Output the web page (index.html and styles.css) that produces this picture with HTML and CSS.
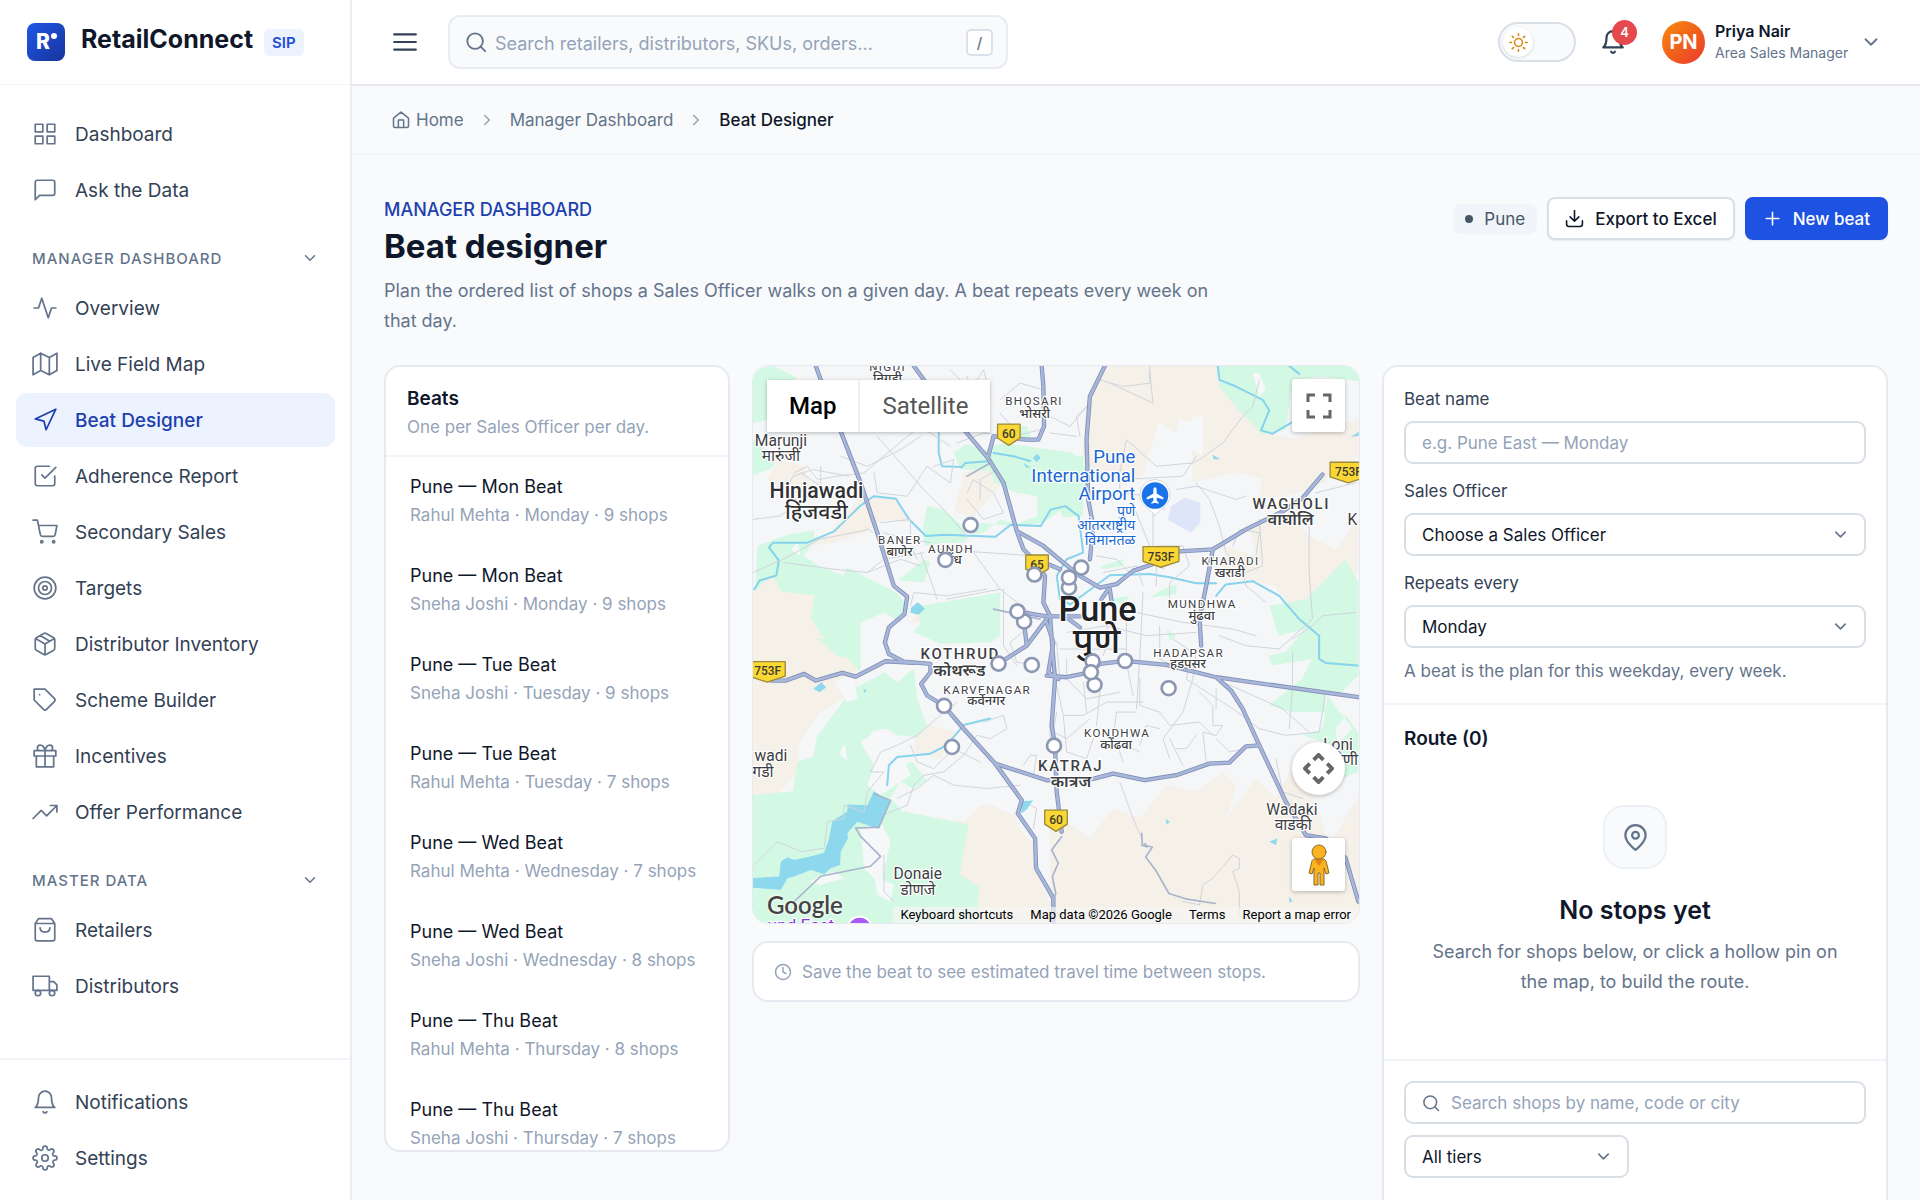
FILE: index.html
```html
<!DOCTYPE html>
<html lang="en">
<head>
<meta charset="utf-8">
<meta name="viewport" content="width=device-width, initial-scale=1">
<title>Beat Designer · RetailConnect</title>
<link rel="stylesheet" href="styles.css">
</head>
<body>
<svg class="sprite" aria-hidden="true">
  <symbol id="grid" viewBox="0 0 24 24"><path d="M3 3h7v7H3zM14 3h7v7h-7zM14 14h7v7h-7zM3 14h7v7H3z"/></symbol>
  <symbol id="chat" viewBox="0 0 24 24"><path d="M21 15a2 2 0 0 1-2 2H7l-4 4V5a2 2 0 0 1 2-2h14a2 2 0 0 1 2 2z"/></symbol>
  <symbol id="down" viewBox="0 0 24 24"><path d="M6 9l6 6 6-6"/></symbol>
  <symbol id="right" viewBox="0 0 24 24"><path d="M9 18l6-6-6-6"/></symbol>
  <symbol id="activity" viewBox="0 0 24 24"><path d="M22 12h-4l-3 9L9 3l-3 9H2"/></symbol>
  <symbol id="map" viewBox="0 0 24 24"><path d="M1 6v16l7-4 8 4 7-4V2l-7 4-8-4zM8 2v16M16 6v16"/></symbol>
  <symbol id="nav" viewBox="0 0 24 24"><path d="M3 11l19-9-9 19-2-8z"/></symbol>
  <symbol id="check" viewBox="0 0 24 24"><path d="M9 11l3 3L22 4M21 12v7a2 2 0 0 1-2 2H5a2 2 0 0 1-2-2V5a2 2 0 0 1 2-2h11"/></symbol>
  <symbol id="cart" viewBox="0 0 24 24"><circle cx="9" cy="21" r="1"/><circle cx="20" cy="21" r="1"/><path d="M1 1h4l2.7 13.4a2 2 0 0 0 2 1.6h9.7a2 2 0 0 0 2-1.6L23 6H6"/></symbol>
  <symbol id="target" viewBox="0 0 24 24"><circle cx="12" cy="12" r="10"/><circle cx="12" cy="12" r="6"/><circle cx="12" cy="12" r="2"/></symbol>
  <symbol id="box" viewBox="0 0 24 24"><path d="M16.500 9.400l-9-5.190M21 16V8a2 2 0 0 0-1-1.730l-7-4a2 2 0 0 0-2 0l-7 4A2 2 0 0 0 3 8v8a2 2 0 0 0 1 1.730l7 4a2 2 0 0 0 2 0l7-4A2 2 0 0 0 21 16zM3.270 6.960L12 12l8.730-5.040M12 22V12"/></symbol>
  <symbol id="tag" viewBox="0 0 24 24"><path d="M20.600 13.400l-7.200 7.200a2 2 0 0 1-2.800 0L2 12V2h10l8.600 8.600a2 2 0 0 1 0 2.800zM7 7h.01"/></symbol>
  <symbol id="gift" viewBox="0 0 24 24"><path d="M20 12v10H4V12M2 7h20v5H2zM12 22V7M12 7H7.500a2.500 2.500 0 0 1 0-5C11 2 12 7 12 7zM12 7h4.500a2.500 2.500 0 0 0 0-5C13 2 12 7 12 7z"/></symbol>
  <symbol id="trend" viewBox="0 0 24 24"><path d="M23 6l-9.500 9.500-5-5L1 18M17 6h6v6"/></symbol>
  <symbol id="bag" viewBox="0 0 24 24"><path d="M6 1.500h12l3 4.500v14a2 2 0 0 1-2 2H5a2 2 0 0 1-2-2V6zM3 6h18M16.500 10c0 2.500-2 4-4.500 4s-4.500-1.500-4.500-4"/></symbol>
  <symbol id="truck" viewBox="0 0 24 24"><path d="M1 3h15v13H1zM16 8h4l3 3v5h-7z"/><circle cx="5.500" cy="18.500" r="2.500"/><circle cx="18.500" cy="18.500" r="2.500"/></symbol>
  <symbol id="bell" viewBox="0 0 24 24"><path d="M18 8A6 6 0 0 0 6 8c0 7-3 9-3 9h18s-3-2-3-9M13.730 21a2 2 0 0 1-3.460 0"/></symbol>
  <symbol id="gear" viewBox="0 0 24 24"><circle cx="12" cy="12" r="3"/><path d="M19.400 15a1.650 1.650 0 0 0 .33 1.820l.06.06a2 2 0 1 1-2.830 2.830l-.06-.06a1.650 1.650 0 0 0-2.800 1.170V21a2 2 0 0 1-4 0v-.09A1.650 1.650 0 0 0 9 19.400a1.650 1.650 0 0 0-1.820.33l-.06.06a2 2 0 1 1-2.830-2.830l.06-.06A1.650 1.650 0 0 0 3.090 14H3a2 2 0 0 1 0-4h.09A1.650 1.650 0 0 0 4.600 9a1.650 1.650 0 0 0-.33-1.820l-.06-.06a2 2 0 1 1 2.830-2.830l.06.06A1.650 1.650 0 0 0 10 3.090V3a2 2 0 0 1 4 0v.09a1.650 1.650 0 0 0 2.800 1.170l.06-.06a2 2 0 1 1 2.830 2.830l-.06.06A1.650 1.650 0 0 0 20.910 10H21a2 2 0 0 1 0 4h-.09a1.650 1.650 0 0 0-1.510 1z"/></symbol>
  <symbol id="menu" viewBox="0 0 24 24"><path d="M2 5h20M2 12h20M2 19h20"/></symbol>
  <symbol id="search" viewBox="0 0 24 24"><circle cx="11" cy="11" r="8.500"/><path d="M22 22l-5-5"/></symbol>
  <symbol id="sun" viewBox="0 0 24 24"><circle cx="12" cy="12" r="5"/><path d="M12 1v2M12 21v2M4.200 4.200l1.400 1.400M18.400 18.400l1.400 1.400M1 12h2M21 12h2M4.200 19.800l1.400-1.400M18.400 5.600l1.400-1.400"/></symbol>
  <symbol id="home" viewBox="0 0 24 24"><path d="M2 9.500L12 1.500l10 8V20a2 2 0 0 1-2 2H4a2 2 0 0 1-2-2zM8.500 22V12h7v10"/></symbol>
  <symbol id="download" viewBox="0 0 24 24"><path d="M22 15v4a3 3 0 0 1-3 3H5a3 3 0 0 1-3-3v-4M6.500 10l5.500 5.500 5.500-5.500M12 15V2"/></symbol>
  <symbol id="plus" viewBox="0 0 24 24"><path d="M12 4v16M4 12h16"/></symbol>
  <symbol id="clock" viewBox="0 0 24 24"><circle cx="12" cy="12" r="10"/><path d="M12 6v6l4 2"/></symbol>
  <symbol id="pin" viewBox="0 0 24 24"><path d="M21 10c0 6.500-9 13-9 13s-9-6.500-9-13a9 9 0 0 1 18 0z"/><circle cx="12" cy="10" r="3"/></symbol>
</svg>
<div class="app">
  <aside class="sidebar">
    <div class="brand">
      <svg class="logo" viewBox="0 0 38 38" aria-hidden="true">
        <defs><linearGradient id="lg" x1="0" y1="0" x2="1" y2="1"><stop offset="0" stop-color="#1f57e8"/><stop offset="1" stop-color="#17349c"/></linearGradient></defs>
        <rect width="38" height="38" rx="8" fill="url(#lg)"/>
        <text class="logo-letter" x="9" y="26">R</text><circle cx="27" cy="13" r="3" fill="#fff"/>
      </svg>
      <span class="brand-name">RetailConnect</span><span class="brand-tag">SIP</span>
    </div>
    <nav class="nav">
      <a class="item" href="#"><svg class="icon"><use href="#grid"/></svg>Dashboard</a>
      <a class="item" href="#"><svg class="icon"><use href="#chat"/></svg>Ask the Data</a>
      <button class="group" type="button">MANAGER DASHBOARD<svg><use href="#down"/></svg></button>
      <a class="item" href="#"><svg class="icon"><use href="#activity"/></svg>Overview</a>
      <a class="item" href="#"><svg class="icon"><use href="#map"/></svg>Live Field Map</a>
      <a class="item active" href="#" aria-current="page"><svg class="icon"><use href="#nav"/></svg>Beat Designer</a>
      <a class="item" href="#"><svg class="icon"><use href="#check"/></svg>Adherence Report</a>
      <a class="item" href="#"><svg class="icon"><use href="#cart"/></svg>Secondary Sales</a>
      <a class="item" href="#"><svg class="icon"><use href="#target"/></svg>Targets</a>
      <a class="item" href="#"><svg class="icon"><use href="#box"/></svg>Distributor Inventory</a>
      <a class="item" href="#"><svg class="icon"><use href="#tag"/></svg>Scheme Builder</a>
      <a class="item" href="#"><svg class="icon"><use href="#gift"/></svg>Incentives</a>
      <a class="item" href="#"><svg class="icon"><use href="#trend"/></svg>Offer Performance</a>
      <button class="group" type="button">MASTER DATA<svg><use href="#down"/></svg></button>
      <a class="item" href="#"><svg class="icon"><use href="#bag"/></svg>Retailers</a>
      <a class="item" href="#"><svg class="icon"><use href="#truck"/></svg>Distributors</a>
    </nav>
    <nav class="nav nav-foot">
      <a class="item" href="#"><svg class="icon"><use href="#bell"/></svg>Notifications</a>
      <a class="item" href="#"><svg class="icon"><use href="#gear"/></svg>Settings</a>
    </nav>
  </aside>

  <div class="main">
    <header class="topbar">
      <button class="icon-btn" type="button" aria-label="Toggle menu"><svg class="icon"><use href="#menu"/></svg></button>
      <div class="global-search">
        <svg class="icon"><use href="#search"/></svg>
        <input type="search" aria-label="Search" placeholder="Search retailers, distributors, SKUs, orders…">
        <kbd>/</kbd>
      </div>
      <div class="top-actions">
        <button class="theme" type="button" aria-label="Switch theme"><span class="knob"><svg><use href="#sun"/></svg></span></button>
        <button class="bell" type="button" aria-label="Notifications"><svg class="icon"><use href="#bell"/></svg><span class="count">4</span></button>
        <button class="user" type="button">
          <span class="avatar">PN</span>
          <span class="who"><span class="who-name">Priya Nair</span><span class="who-role">Area Sales Manager</span></span>
          <svg class="small-icon"><use href="#down"/></svg>
        </button>
      </div>
    </header>
    <nav class="crumbs" aria-label="Breadcrumb">
      <a href="#"><svg class="home"><use href="#home"/></svg>Home</a>
      <svg class="sep"><use href="#right"/></svg>
      <a href="#">Manager Dashboard</a>
      <svg class="sep"><use href="#right"/></svg>
      <span class="here">Beat Designer</span>
    </nav>
    <main class="page">
      <div class="page-head">
        <div class="intro">
          <p class="eyebrow">MANAGER DASHBOARD</p>
          <h1>Beat designer</h1>
          <p class="desc">Plan the ordered list of shops a Sales Officer walks on a given day. A beat repeats every week on that day.</p>
        </div>
        <div class="actions">
          <span class="chip">Pune</span>
          <button class="btn" type="button"><svg><use href="#download"/></svg>Export to Excel</button>
          <button class="btn primary" type="button"><svg><use href="#plus"/></svg>New beat</button>
        </div>
      </div>

      <div class="columns">
        <section class="card beats">
          <header class="beats-head"><h2>Beats</h2><p>One per Sales Officer per day.</p></header>
          <div class="beat-list">
            <button class="beat" type="button"><span class="beat-name">Pune — Mon Beat</span><span class="beat-meta">Rahul Mehta · Monday · 9 shops</span></button>
            <button class="beat" type="button"><span class="beat-name">Pune — Mon Beat</span><span class="beat-meta">Sneha Joshi · Monday · 9 shops</span></button>
            <button class="beat" type="button"><span class="beat-name">Pune — Tue Beat</span><span class="beat-meta">Sneha Joshi · Tuesday · 9 shops</span></button>
            <button class="beat" type="button"><span class="beat-name">Pune — Tue Beat</span><span class="beat-meta">Rahul Mehta · Tuesday · 7 shops</span></button>
            <button class="beat" type="button"><span class="beat-name">Pune — Wed Beat</span><span class="beat-meta">Rahul Mehta · Wednesday · 7 shops</span></button>
            <button class="beat" type="button"><span class="beat-name">Pune — Wed Beat</span><span class="beat-meta">Sneha Joshi · Wednesday · 8 shops</span></button>
            <button class="beat" type="button"><span class="beat-name">Pune — Thu Beat</span><span class="beat-meta">Rahul Mehta · Thursday · 8 shops</span></button>
            <button class="beat" type="button"><span class="beat-name">Pune — Thu Beat</span><span class="beat-meta">Sneha Joshi · Thursday · 7 shops</span></button>
          </div>
        </section>

        <section class="center">
          <div class="map">
            <svg class="map-art" viewBox="6 18 1824 1677" preserveAspectRatio="xMidYMid slice" role="img" aria-label="Map of Pune with shop pins">
              <rect x="0" y="0" width="1840" height="1700" fill="#f5f6f8"/>
              <g fill="#f5f0e8">
                <path d="M1065 18h340l10 60 60 80 70 60 90 20 193-60v120l-80 20-20 50-110 40-90 10 10-60-80-20-130 30 0-180-40-10-10 40-50-30-50 160-60 30-120-70 10-170z"/>
                <path d="M6 690l60-60 40 60 90 10-10 80 80 90 60 30-10 100-110 60-60 90-10 100-60 60-70 10z"/>
                <path d="M6 90l44 10 0 80-44 10zM80 300l80 20 20 60-60 30-70-50zM640 340l90-20 20 60-80 90-60-10z"/>
                <path d="M330 410l100 10 60 70-90-10-60 40-90 30-150 20-20-30 150-10zM480 790l30-50 60-10-50 60zM120 540l70-30 0 30z"/>
                <path d="M590 1490l30-130 80-20 90-20 10 80 50 60 10 80 40 100 10 60H600l50-110zM500 1090l120 30-50 80-80-20z"/>
                <path d="M900 1400l60 0 60 40 70-90 80 30 80-100 90 20 80-60 40 40-30 100 90-120 60 60 40-80 60 40 60 180 108-180v412H900z"/>
                <path d="M1500 500l120-30 60 60 80 40 68-90v160l-60 40-50 60-80 20-60-80-100-20-60-40 10-60 90 30z"/>
              </g>
              <g fill="#d3f8e3">
                <path d="M6 30l60-12 70 34-10 40-76 8v80l-44 10zM6 240l70 60-10 24-60 24zM20 560l90-34 80-12-6 40-26 36 50 32 70 28 10-26 90 46 60 30 32 40-20 50-50-30-70 30v150l-56-60-60-50-34-56 12-66-100-10-30-52-50 50z"/>
                <path d="M530 440l50 10 60 54v26l60-10 50-40 60 20 70-10 110-80 30-70-50-60-210-30-60 20-50-16-40 24 20 50 90 6 12 34 60 30 70 12 0 60-80 30-90-10-50 60-60 0-60 10-4-60zM500 742l250-42v130l-30 20-150 4-80-34 20-30zM460 650l60-50 20 10-20 60-80-8zM750 190l80 10 20 50-60-10z"/>
                <path d="M1400 18h430v46l-110-14-90 10-20 150-70 14-70-70-60-74zM1000 290l-90-6-20 80 50 110 60-6zM1560 740l110-20 60-60 60-60 38 70v280l-60 60-40-10 0 60-100 0-70-20 100-80 30-60-120 20-10-30 50-10 60-70-80 20zM1735 1010l-15 100-60 20 100 30 50-50zM1760 1110l30-40 38 50v120l-50 20z"/>
                <path d="M1240 690l40-14 0 30-80 10zM1050 620l70-20 0 20-60 10zM1080 720l60-10-20 30z"/>
                <path d="M290 1010l20-20 130-70h50l10 100 30 80-30 36-60-6-30-20-46 8-20 50 40 20 30 50 70-30 46 60-30 30-50-30-30 50 34 40 200 40-26 150 60 40-10 80-36 86H6v-445l120-10 14-90 48-14 10-60zM200 840l60 50 70 12-30-62z"/>
                <path d="M160 430l24 30-30 20zM1250 810l30 20-20 16z"/>
              </g>
              <g fill="#f6f7f9">
                <path d="M265 1185l18-30 6 50zM330 1410l60-20 30 60-30 130-50-50zM175 1570l70-30 40 20-80 20zM330 1150l60-40 50 30 40 110-90 60-40-30 20-60zM370 1550l60 30-10 50-40-20zM440 1320l100-60 100 40 160-10-10 80-90-40-60 60-80-30-80-30z"/>
                <path d="M250 970l60-30 10 80-30 10zM390 930l60-40 50 30-60 50zM1300 250l30-80 30 0v120zM1510 40l20 0 20 50-20 20zM120 570l20-20 10 40z"/>
              </g>
              <path d="M1265 440l40-25 47 15v60l-28 30-70-40z" fill="#dfe5f8"/>
              <path fill="#8ed8ee" d="M0 1560L85 1555 90 1510 110 1497 130 1505 175 1495 220 1483 235 1440 245 1388 290 1360 290 1338 350 1340 370 1298 420 1330 385 1412 320 1390 290 1424 292 1440 270 1480 268 1520 240 1530 220 1548 180 1535 130 1555 110 1560 90 1595 0 1588z"/>
              <g fill="#8ed8ee">
                <path d="M482 745l20-16 22 20-20 18-24-6zM815 1328l34-2-20 28-16 12zM188 990l24-20 14 16-20 14zM848 295l14-12 10 12-12 12zM820 310l22 14-14 0zM1805 232l24-16v12zM1390 285l22 14-20 0zM1560 1450l24-10-4 20zM338 992l10 0-5 12zM1249 1382l12 8-10 8zM1620 1615l10 14-10 4z"/>
              </g>
              <g class="river">
                <path d="M10 690l16-26 50-15 8-45-30-40 12-14 104 0 80-34 80-78 40-28 66 8 40 62 50 50 60-4 150 6 46-36 90 4 30-50 44-10 40 30 14 110-50 20-30 50 10 70 30 16 120-88 120-4 60 10 80 18 60 0M1400 710l28-34 82-10 80 44 60 70 60 50 0 70 20 12 96 8"/>
                <path d="M410 1280l5-60 25-25 100-10 50-26 50-60 80-20M1405 18l5 42 50 20 80 40 20 32-25 60 35 10 58-34M1620 18l30 24M565 220l0 60 10 40 60 2 10-12 70-5M730 280l60 10 50 14"/>
              </g>
              <g class="road">
                <path d="M130 340l40-20 30 40 60-10 80-10 130-110 40-30 90 60M6 480l80-10 60-40-40-40 20-40 60-20 110 20M380 230l140 160 60 60 70 80M270 290l80 30 100-50 60-40M370 340l10 60 90 10 60-90 70 50 10-70-60 20M560 60l0 60 60 60 60-50-30-80M600 30l60 60 40-60 20 70-60 30M750 120l60-50 70 20M750 160l50 60M400 60l60 80-60 40M620 250l80-30 90 10 80-20M930 120l-40 20M6 640l90-40 110-60 150-30 10 10M100 610l150 20 100 10 100-40 60 20M350 640l50-40 120-20M480 740l10-40 100 10 120-20M510 580l30 80 20 60M590 720l160-30M670 580l80 110 90 70M560 570l300 20M390 490l90-10 0 60 60 10M400 520l70 20 30 60M760 690v170l40 60M840 800l-60 50 20 60 70 10M690 420v-60l50-30M650 400l20-40 60 40 30 60-60 20-50-60M150 340l60 40 0-60M700 1090l60-20 10 40-50 30-40-10-40 60-60 50-60 10-30 30-20 60-70 30M440 1320l60-30 50-40 60 30 100 10 100-10M480 1160l20 50 50 20 60-60 80 40M820 1220l20-30 20 0-10 60-40-10M840 1340l20 10-10 60M10 1520l70-70 70 30 70-10 10-80 50-10 0-40 60 20 10-60 50-60-40 0 30-60 50-20 60-30 70-60 50-40M400 1490l0 110 30 30"/>
                <path d="M1050 60l70 20 80-10 0-50M1080 70l130 60-10-100M900 170l60 30 60-70-40 40 10 60M900 220l80 10M1530 60l-20 80-30 30-60 80-70 50-20 10-110 10-90-80-20 100 0 60 90 10M1120 360l180-10 40-60M1215 360l-30 60 60 30M1280 390l60-10 120 40 30-10M1340 370l40 50 30 80 20 80 30 30M1210 460l0 120 30 50M1160 460l40 100 0 40M1040 590l60 10 40 40M1060 640l100-20 20 60M1220 680v-120h80l20 60-60 50 0 60M1450 560l20-50 60 10M1530 520l-10 70-40 40 10 50 60 50M1680 480v160l10 140-100 90-100-10-80-30M1820 760l-100 10-30 30-60 40M1700 400l120-30M1530 480l10 140-80 30M1160 760l140 30 150 20 70 20M1060 770l20 60-20 60M1130 730v180l20 100M1180 700l-10 200-10 150M1230 800v100l80 40M950 820l120-20 120 30 150-10M930 870l200 0M950 900l0 60 60 60 100-20M1270 840l60 40-20 80 140 90 80 60 80 20 100-10 20-120M1400 960l200 90 80 70M1630 880l0 100-10 130M920 980l20 90 60 0 70-40 110 0M920 1060l-10 60 40 20 70-60M1000 970l10 90M1050 1000l-10 100M940 1070l10 110 60 20 20-60M1170 960v80l60 20 30 40 90-10 40 40M1160 1060l-60 0-10 80 80 40M1100 1150l20 60M1260 1200l-20-60 60-80 30-100 10-80M1280 1170l30 0 30-40M1300 1220l-40-80M1350 1000l40 40 0 60 30 0-20 30-40-10 10 90M1400 1050v-60M1400 1140l40 40 50-10M1580 1200l20 100 60 20M900 1100l0 50M1110 1270l40 110 26 60"/>
                <path d="M1350 1640l10-60 30-20 60-70 20 10 0 30-20 10 20 60 0 70 30 30M1350 1640l-50-10M920 850l10 120M1230 1110l-40-10-20 60"/>
              </g>
              <g class="sub">
                <path d="M130 1630l80-76 150-30 30-30-60-60-15-25 70-3 35-80-50-20M1176 1425l2 35 30 6-20 30 30 40 40 70 50 16 90 14M1176 1460l16 6-6-10M650 350l70-40M730 750l140 30"/>
              </g>
              <g id="highways">
                <g class="hw-edge"><use href="#hw"/></g>
                <g class="hw-fill"><g id="hw">
                  <path d="M195 18l15 42 60 155 60 155 50 150 50 160 40 32-8 53-47 40-12 45 12 35 45 23 80 7 0 25-28 35 18 35 51 31 59 69 95 105 80 110-12 40 52 75 3 90 52 90 0 73"/>
                  <path d="M490 18l60 82 100 120 63 75 47 75 40 145 80 45 60 50 50 40 60 35 50-10 50-40 50-17 90-42 100-6 100-60 110-54 60-40 60-71"/>
                  <path d="M875 18l5 62 2 120-17 40-35 0-100-10-17 65M1065 18l-45 92-10 130 5 180 15 80-10 100"/>
                  <path d="M800 515l20 55 30 30 35 50-5 80 20 40 5 70 10 120-10 140 10 60 5 140 15 120M800 757l90 15 100 0M890 780l-60 80-85 54M830 860l-6-50M890 790l20 60-15 90 30 20M860 600l70 30"/>
                  <path d="M60 965l45 0 55-20 35 20 80-23 40 11 90-46 85 5M890 950l60 5 70-15 30-25 76-9 124 12 150 37 428 60M1400 955l45 40 35 55 50 110 80 170 60 100 60 10 60 60 38 130"/>
                  <path d="M735 1215l155 50 140-4 60-16 95 20 95-15 100-35 60-3 50-49 40-3M1390 570l-20 110-20 100 5 80M1075 690l-20 30M1080 690l5 35M950 775l40 30"/>
                </g></g>
                <path class="sub" d="M935 1435l-30 40 20 40-18 40 10 50-8 40"/>
              </g>
              <g class="shields">
                <path d="M190 64h62l-2 30h-58zM742 193h68v42l-34 22-34-22zM827 587h68v42l-34 22-34-22zM1180 562h108v44l-54 18-54-18zM1743 308h110v44l-55 18-55-18zM-5 908h108v44l-54 18-54-18zM884 1355h68v42l-34 22-34-22z"/>
                <g class="shield-text">
                  <text x="776" y="235">60</text><text x="861" y="629">65</text><text x="1234" y="604">753F</text><text x="1798" y="349">753F</text><text x="50" y="949">753F</text><text x="918" y="1397">60</text>
                </g>
              </g>
              <g class="label caps">
                <text x="411" y="34">NIGDI</text><text x="852" y="137">BHOSARI</text><text x="448" y="554">BANER</text><text x="602" y="580">AUNDH</text><text x="711" y="1004">KARVENAGAR</text><text x="1443" y="617">KHARADI</text><text x="1358" y="746">MUNDHWA</text><text x="1317" y="893">HADAPSAR</text><text x="1102" y="1136">KONDHWA</text>
              </g>
              <g class="label caps big"><text x="630" y="900">KOTHRUD</text><text x="1626" y="450">WAGHOLI</text><text x="962" y="1238">KATRAJ</text></g>
              <g class="label hindi"><text x="411" y="68">निगडी</text><text x="854" y="174">भोसरी</text><text x="447" y="590">बाणेर</text><text x="601" y="614">औंध</text><text x="708" y="1038">कर्वेनगर</text><text x="1441" y="654">खराडी</text><text x="1356" y="784">मुंढवा</text><text x="1315" y="928">हडपसर</text><text x="1099" y="1172">कोंढवा</text></g>
              <g class="label hindi mid"><text x="627" y="950">कोथरूड</text><text x="1624" y="498">वाघोलि</text><text x="963" y="1284">कात्रज</text></g>
              <g class="label town"><text x="90" y="260">Marunji</text><text x="90" y="304">मारुंजी</text><text x="502" y="1562">Donaie</text><text x="502" y="1610">डोणजे</text><text x="1628" y="1370">Wadaki</text><text x="1632" y="1416">वाडकी</text><text x="1767" y="1174">Loni</text><text x="1782" y="1218">लोणी</text><text x="60" y="1208">wadi</text><text x="36" y="1254">गडी</text><text x="1810" y="498">K</text></g>
              <g class="label city"><text x="197" y="415">Hinjawadi</text><text x="197" y="478">हिंजवडी</text></g>
              <g class="label capital"><text x="1043" y="786">Pune</text><text class="capital-hindi" x="1040" y="882">पुणे</text></g>
              <g class="label airport"><text x="1157" y="311">Pune</text><text x="1157" y="367">International</text><text x="1157" y="423">Airport</text></g>
              <g class="label airport small"><text x="1157" y="470">पुणे</text><text x="1157" y="513">आंतरराष्ट्रीय</text><text x="1157" y="558">विमानतळ</text></g>
              <text class="label east" x="150" y="1718">und East</text>
              <circle cx="327" cy="1714" r="38" fill="#a45cf5" stroke="#fff" stroke-width="6"/>
              <path d="M1216 468c-12-18-46-30-46-62a46 46 0 0 1 92 0c0 32-34 44-46 62z" fill="#fff" stroke="#c5cad3" stroke-width="2"/>
              <circle cx="1216" cy="408" r="40" fill="#1a73e8"/>
              <path transform="translate(1216 408)" d="M0-25c3 0 5 4 5 9v10l20 12v6L5 6v10l6 5v4L0 22l-11 3v-4l6-5V6l-20 6V6L-5-6v-10c0-5 2-9 5-9z" fill="#fff"/>
              <g class="pins">
                <circle cx="661" cy="497" r="21"/><circle cx="585" cy="602" r="21"/><circle cx="853" cy="646" r="21"/><circle cx="822" cy="787" r="21"/><circle cx="802" cy="757" r="21"/><circle cx="957" cy="685" r="21"/><circle cx="994" cy="625" r="21"/><circle cx="957" cy="655" r="21"/><circle cx="745" cy="914" r="21"/><circle cx="845" cy="918" r="21"/><circle cx="581" cy="1041" r="21"/><circle cx="605" cy="1165" r="21"/><circle cx="912" cy="1161" r="21"/><circle cx="1028" cy="907" r="21"/><circle cx="1126" cy="906" r="21"/><circle cx="1034" cy="978" r="21"/><circle cx="1023" cy="940" r="21"/><circle cx="1257" cy="988" r="21"/>
              </g>
            </svg>
            <div class="map-type"><button class="on" type="button">Map</button><button type="button">Satellite</button></div>
            <button class="map-btn full" type="button" aria-label="Toggle fullscreen"><svg viewBox="0 0 26 26"><path d="M2 9V2h7M17 2h7v7M24 17v7h-7M9 24H2v-7"/></svg></button>
            <button class="map-btn pan" type="button" aria-label="Map camera controls"><svg viewBox="0 0 32 32"><path d="M11 7l5-5 5 5M25 11l5 5-5 5M21 25l-5 5-5-5M7 21l-5-5 5-5"/></svg></button>
            <button class="map-btn man" type="button" aria-label="Street View"><svg viewBox="0 0 24 42"><path d="M7 15h10l2 2 3 12-3 1-2-6v17h-4V29h-2v12H7V24l-2 6-3-1 3-12z" fill="#fbb41f" stroke="#8a6a2a"/><path d="M7 15h10l-5 7z" fill="#e0861a"/><circle cx="12" cy="8" r="7" fill="#fbb41f" stroke="#8a6a2a"/></svg></button>
            <span class="google">Google</span>
            <div class="map-legal"><button type="button">Keyboard shortcuts</button><span>Map data ©2026 Google</span><a href="#">Terms</a><a href="#">Report a map error</a></div>
          </div>
          <p class="card travel"><svg><use href="#clock"/></svg>Save the beat to see estimated travel time between stops.</p>
        </section>

        <form class="card editor">
          <div class="block">
            <label for="name">Beat name</label>
            <input class="field" id="name" type="text" placeholder="e.g. Pune East — Monday">
            <label for="officer">Sales Officer</label>
            <span class="select"><select class="field" id="officer"><option>Choose a Sales Officer</option></select><svg><use href="#down"/></svg></span>
            <label for="day">Repeats every</label>
            <span class="select"><select class="field" id="day"><option>Monday</option></select><svg><use href="#down"/></svg></span>
            <p class="hint">A beat is the plan for this weekday, every week.</p>
          </div>
          <div class="block route">
            <h2>Route (0)</h2>
            <div class="empty">
              <span class="empty-icon"><svg><use href="#pin"/></svg></span>
              <h3>No stops yet</h3>
              <p>Search for shops below, or click a hollow pin on the map, to build the route.</p>
            </div>
          </div>
          <div class="block finder">
            <div class="field shop-search"><svg><use href="#search"/></svg><input type="search" aria-label="Search shops" placeholder="Search shops by name, code or city"></div>
            <span class="select tiers"><select class="field" aria-label="Tier"><option>All tiers</option></select><svg><use href="#down"/></svg></span>
          </div>
        </form>
      </div>
    </main>
  </div>
</div>
</body>
</html>
```

FILE: styles.css
```css
* { box-sizing: border-box; }
body, h1, h2, h3, p { margin: 0; }
body { font-family: Inter, "Noto Sans", sans-serif; font-size: 18px; color: #0f172a; background: #f8fafc; }
button, input, select { font: inherit; color: inherit; }
button { border: 0; padding: 0; background: none; cursor: pointer; }
a { color: inherit; text-decoration: none; }
svg { fill: none; stroke: currentColor; stroke-width: 2; stroke-linecap: round; stroke-linejoin: round; flex: none; }
input::placeholder { color: #94a3b8; opacity: 1; }
.sprite { display: none; }
.icon { width: 26px; height: 26px; stroke-width: 1.6; }
.small-icon { width: 22px; height: 22px; color: #64748b; }

.app { display: flex; height: 100vh; overflow: hidden; }

/* Sidebar */
.sidebar { flex: none; width: 352px; display: flex; flex-direction: column; background: #fff; border-right: 2px solid #e9edf2; }
.brand { display: flex; align-items: center; height: 85px; padding: 0 27px; border-bottom: 1px solid #f1f5f9; }
.logo { width: 38px; height: 38px; stroke: none; }
.logo-letter { font: 800 21px Inter, sans-serif; fill: #fff; }
.brand-name { margin-left: 16px; font-size: 25px; font-weight: 700; line-height: 36px; padding-bottom: 6px; }
.brand-tag { margin-left: 11px; padding: 0 8px; border-radius: 6px; background: #edf2ff; color: #1d4ed8; font-size: 15px; font-weight: 600; line-height: 27px; }
.nav { display: flex; flex-direction: column; gap: 2px; flex: 1; min-height: 0; padding: 22px 15px 0 16px; overflow: hidden; }
.nav-foot { flex: none; padding: 15px 15px 15px 16px; border-top: 2px solid #f1f5f9; }
.item { display: flex; align-items: center; gap: 17px; flex: none; height: 54px; padding: 0 16px; border-radius: 11px; color: #334155; font-size: 19px; }
.item .icon { color: #64748b; }
.item.active, .item.active .icon { color: #1d40af; }
.item.active { background: #edf2ff; font-weight: 500; }
.group { display: flex; align-items: center; justify-content: space-between; flex: none; height: 36px; margin: 21px 0 3px; padding: 0 16px; color: #64748b; font-size: 15px; font-weight: 500; letter-spacing: 1px; }
.group svg { width: 18px; height: 18px; }

/* Top bar */
.main { flex: 1; min-width: 0; display: flex; flex-direction: column; overflow: hidden; }
.topbar { display: flex; align-items: center; flex: none; height: 86px; padding: 0 38px 0 40px; background: #fff; border-bottom: 2px solid #e6eaef; }
.icon-btn { display: flex; color: #334155; }
.icon-btn .icon { stroke-width: 2; }
.global-search { display: flex; align-items: center; width: 560px; height: 54px; margin-left: 30px; padding: 0 13px 0 15px; border: 2px solid #e8ecf1; border-radius: 12px; background: #f8fafc; }
.global-search .icon { width: 22px; height: 22px; color: #64748b; stroke-width: 2; }
.global-search input { flex: 1; min-width: 0; margin: 0 8px; padding: 2px 0 0; border: 0; background: none; outline: 0; }
kbd { width: 27px; height: 27px; border: 2px solid #dbe1e8; border-radius: 5px; background: #fff; color: #64748b; font: 500 15px/23px Inter, sans-serif; text-align: center; }
.top-actions { display: flex; align-items: center; margin-left: auto; }
.theme { width: 78px; height: 40px; padding: 3px; border: 2px solid #d8dfe7; border-radius: 20px; background: #f8fafc; }
.knob { display: flex; align-items: center; justify-content: center; width: 30px; height: 30px; border-radius: 50%; background: #fff; color: #d98a12; box-shadow: 0 1px 3px #0f172a26; }
.knob svg { width: 19px; height: 19px; }
.bell { position: relative; display: flex; margin: 0 36px 0 24px; color: #334155; }
.bell .icon { stroke-width: 2; }
.count { position: absolute; left: 12px; top: -9px; width: 25px; height: 25px; border-radius: 50%; background: #e5484d; color: #fff; font-size: 13px; font-weight: 600; line-height: 25px; text-align: center; }
.user { display: flex; align-items: center; text-align: left; }
.avatar { width: 43px; height: 43px; margin-right: 10px; border-radius: 50%; background: linear-gradient(135deg, #f98b07, #e8382f); color: #fff; font-size: 20px; font-weight: 700; line-height: 43px; text-align: center; }
.who { display: grid; margin-right: 9px; }
.who-name { font-size: 16px; font-weight: 600; line-height: 21px; }
.who-role { color: #64748b; font-size: 14px; line-height: 21px; width: 136px; white-space: nowrap; }

.crumbs { display: flex; align-items: center; flex: none; height: 69px; padding: 0 40px; border-bottom: 2px solid #f1f4f8; color: #64748b; font-size: 17px; }
.crumbs a { display: flex; align-items: center; gap: 6px; }
.home { width: 18px; height: 18px; }
.sep { width: 18px; height: 18px; margin: 0 14px; color: #94a3b8; }
.here { color: #0f172a; font-weight: 500; }

/* Page */
.page { padding: 38px 32px 0; }
.page-head { display: flex; justify-content: space-between; margin-bottom: 29px; }
.intro { max-width: 860px; }
.eyebrow { color: #1d40af; font-size: 18px; font-weight: 500; line-height: 34px; }
h1 { font-size: 33px; font-weight: 700; line-height: 38px; }
.desc { padding-top: 11px; color: #64748b; font-size: 18px; line-height: 30px; }
.actions { display: flex; align-items: center; gap: 10px; height: 43px; margin-top: 4px; }
.chip { display: flex; align-items: center; gap: 11px; height: 30px; padding: 0 12px; border-radius: 8px; background: #f1f5f9; color: #475569; font-size: 17px; }
.chip::before { content: ""; width: 8px; height: 8px; border-radius: 50%; background: #475569; }
.btn { display: flex; align-items: center; gap: 11px; height: 43px; padding: 0 16px; border: 2px solid #d8dfe7; border-radius: 8px; background: #fff; font-size: 17px; font-weight: 500; box-shadow: 0 1px 2px #0f172a12; }
.btn svg { width: 19px; height: 19px; }
.primary { border-color: #1d52e2; background: #1d52e2; color: #fff; }

.columns { display: grid; grid-template-columns: 346fr 608fr 506fr; gap: 22px; align-items: start; }
.card { border: 2px solid #e6eaf0; border-radius: 16px; background: #fff; overflow: hidden; }
h2 { font-size: 19px; font-weight: 600; line-height: 28px; }
.beats-head { padding: 18px 21px 14px; border-bottom: 2px solid #f1f5f9; }
.beats-head p { color: #94a3b8; font-size: 17px; line-height: 28px; }
.beat-list { max-height: 693px; overflow: hidden; }
.beat { display: block; width: 100%; height: 89px; padding: 0 24px 2px; text-align: left; }
.beat span { display: block; line-height: 28px; white-space: nowrap; }
.beat-name { font-size: 18px; }
.beat-meta { color: #94a3b8; font-size: 17px; }

.center { display: grid; gap: 17px; }
.travel { display: flex; align-items: center; gap: 10px; height: 61px; padding: 0 20px; color: #94a3b8; font-size: 17px; }
.travel svg { width: 18px; height: 18px; }

/* Map */
.map { position: relative; height: 559px; border: 1px solid #e6eaf0; border-radius: 16px; overflow: hidden; font-family: Roboto, "Noto Sans", sans-serif; }
.map-art { display: block; width: 100%; height: 100%; stroke: none; }
.river path { fill: none; stroke: #85d3ec; stroke-width: 6; }
.road path { fill: none; stroke: #d0d4dc; stroke-width: 3; }
.sub, .sub path { fill: none; stroke: #a9b4cc; stroke-width: 5; }
.hw-edge { stroke: #7f8fb6; stroke-width: 13; fill: none; }
.hw-fill { stroke: #a8b6da; stroke-width: 8; fill: none; }
.shields path { fill: #fbd733; stroke: #9c8a3a; stroke-width: 4; }
.shield-text { fill: #3c3b30; font-size: 36px; font-weight: 500; text-anchor: middle; }
.label { fill: #3c4043; stroke: #fff; stroke-width: 7; paint-order: stroke; text-anchor: middle; font-weight: 500; }
.caps { font-size: 35px; letter-spacing: 4px; font-weight: 400; }
.caps.big { font-size: 45px; letter-spacing: 5px; font-weight: 500; }
.hindi { font-size: 39px; }
.hindi.mid { font-size: 50px; font-weight: 600; }
.town { font-size: 47px; font-weight: 400; }
.city { font-size: 64px; fill: #303134; }
.capital { font-size: 103px; fill: #202124; }
.capital-hindi { font-size: 108px; }
.airport { fill: #1967d2; font-size: 56px; font-weight: 400; text-anchor: end; }
.airport.small { font-size: 43px; }
.east { fill: #8a35e0; font-size: 52px; font-weight: 400; }
.pins circle { fill: #fff; stroke: #8c97b4; stroke-width: 8; }
.map-type { position: absolute; left: 14px; top: 14px; display: flex; height: 52px; background: #fff; box-shadow: 0 1px 4px #0004; }
.map-type button { padding: 0 22px; color: #565656; font-size: 24px; }
.map-type .on { border-right: 2px solid #eee; color: #000; font-weight: 500; }
.map-btn { position: absolute; right: 14px; width: 53px; height: 53px; display: grid; place-items: center; border-radius: 3px; background: #fff; color: #666; box-shadow: 0 1px 4px #0004; }
.full { top: 13px; }
.full svg { width: 26px; height: 26px; stroke-width: 3; stroke-linecap: butt; stroke-linejoin: miter; }
.pan { bottom: 128px; border-radius: 50%; }
.pan svg { width: 31px; height: 31px; stroke-width: 4; stroke-linecap: butt; stroke-linejoin: miter; }
.man { bottom: 32px; }
.man svg { width: 24px; height: 42px; stroke: none; stroke-width: 1; }
.google { position: absolute; left: 14px; bottom: 3px; color: #444; font: 600 24px/30px Lato, sans-serif; text-shadow: 0 0 3px #fff, 0 0 3px #fff; }
.map-legal { position: absolute; right: 0; bottom: 0; display: flex; gap: 17px; padding: 0 8px; background: #f5f5f5b0; color: #000; font-size: 13px; line-height: 16px; }

/* Editor */
.block { display: flex; flex-direction: column; padding: 20px 20px; }
.block + .block { border-top: 2px solid #f1f5f9; }
label { margin-bottom: 10px; color: #334155; font-size: 17px; line-height: 24px; }
.field { width: 100%; height: 43px; padding: 0 16px; border: 2px solid #d8dfe7; border-radius: 9px; background: #fff; font-size: 17px; outline: 0; appearance: none; }
.block .field + label, .block .select + label { margin-top: 15px; }
.select { display: grid; align-items: center; }
.select > * { grid-area: 1 / 1; }
.select svg { justify-self: end; width: 19px; height: 19px; margin-right: 16px; color: #64748b; pointer-events: none; }
.hint { margin-top: 11px; color: #64748b; font-size: 17px; line-height: 24px; }
.block.route { padding-bottom: 62px; }
.empty { display: flex; flex-direction: column; align-items: center; padding: 52px 20px 0; text-align: center; }
.empty-icon { display: grid; place-items: center; width: 64px; height: 64px; border: 2px solid #edf1f5; border-radius: 21px; background: #f8fafc; color: #64748b; }
.empty-icon svg { width: 27px; height: 27px; }
h3 { margin: 25px 0 11px; font-size: 25px; font-weight: 600; line-height: 32px; }
.empty p { max-width: 430px; color: #64748b; font-size: 18px; line-height: 30px; }
.block.finder { gap: 11px; padding-bottom: 60px; }
.shop-search { display: flex; align-items: center; gap: 11px; }
.shop-search svg { width: 18px; height: 18px; color: #64748b; }
.shop-search input { flex: 1; min-width: 0; padding: 0; border: 0; outline: 0; background: none; }
.tiers { width: 225px; }
```
